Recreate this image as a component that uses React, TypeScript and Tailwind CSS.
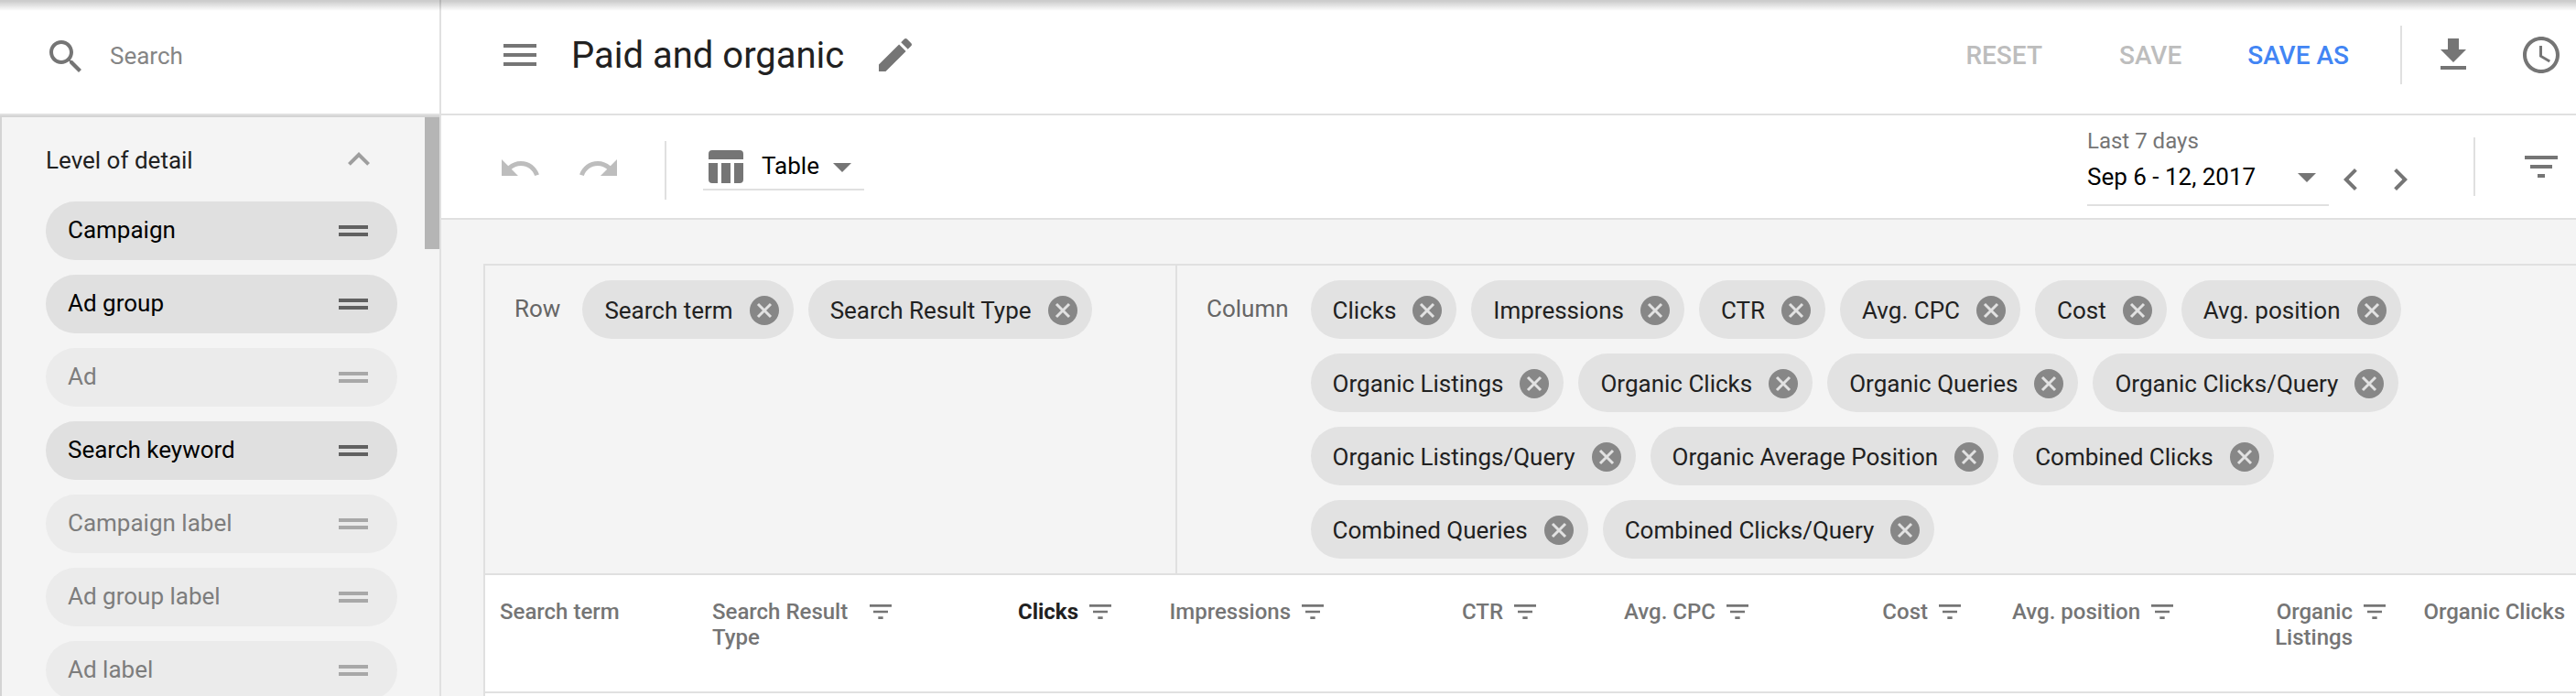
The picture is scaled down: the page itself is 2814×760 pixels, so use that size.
import { useState } from 'react'
import type { ReactNode } from 'react'

const levels = [
  { name: 'Campaign', enabled: true },
  { name: 'Ad group', enabled: true },
  { name: 'Ad', enabled: false },
  { name: 'Search keyword', enabled: true },
  { name: 'Campaign label', enabled: false },
  { name: 'Ad group label', enabled: false },
  { name: 'Ad label', enabled: false },
]

const initialRows = ['Search term', 'Search Result Type']

const initialColumns = [
  'Clicks',
  'Impressions',
  'CTR',
  'Avg. CPC',
  'Cost',
  'Avg. position',
  'Organic Listings',
  'Organic Clicks',
  'Organic Queries',
  'Organic Clicks/Query',
  'Organic Listings/Query',
  'Organic Average Position',
  'Combined Clicks',
  'Combined Queries',
  'Combined Clicks/Query',
]

const metrics = [
  'Clicks',
  'Impressions',
  'CTR',
  'Avg. CPC',
  'Cost',
  'Avg. position',
  'Organic Listings',
  'Organic Clicks',
]

const icons = {
  search:
    'M15.5 14h-.79l-.28-.27C15.41 12.59 16 11.11 16 9.5 16 5.91 13.09 3 9.5 3S3 5.91 3 9.5 5.91 16 9.5 16c1.61 0 3.09-.59 4.23-1.57l.27.28v.79l5 4.99L20.49 19l-4.99-5zm-6 0C7.01 14 5 11.99 5 9.5S7.01 5 9.5 5 14 7.01 14 9.5 11.99 14 9.5 14z',
  menu: 'M3 18h18v-2H3v2zm0-5h18v-2H3v2zm0-7v2h18V6H3z',
  edit: 'M3 17.25V21h3.75L17.81 9.94l-3.75-3.75L3 17.25zM20.71 7.04c.39-.39.39-1.02 0-1.41l-2.34-2.34c-.39-.39-1.02-.39-1.41 0l-1.83 1.83 3.75 3.75 1.83-1.83z',
  download: 'M19 9h-4V3H9v6H5l7 7 7-7zM5 18v2h14v-2H5z',
  clock:
    'M11.99 2C6.47 2 2 6.48 2 12s4.47 10 9.99 10C17.52 22 22 17.52 22 12S17.52 2 11.99 2zM12 20c-4.42 0-8-3.58-8-8s3.58-8 8-8 8 3.58 8 8-3.58 8-8 8zm.5-13H11v6l5.25 3.15.75-1.23-4.5-2.67z',
  undo: 'M12.5 8c-2.65 0-5.05.99-6.9 2.6L2 7v9h9l-3.62-3.62c1.39-1.16 3.16-1.88 5.12-1.88 3.54 0 6.55 2.31 7.6 5.5l2.37-.78C21.08 11.03 17.15 8 12.5 8z',
  redo: 'M18.4 10.6C16.55 8.99 14.15 8 11.5 8c-4.65 0-8.58 3.03-9.96 7.22L3.9 16c1.05-3.19 4.05-5.5 7.6-5.5 1.95 0 3.73.72 5.12 1.88L13 16h9V7l-3.6 3.6z',
  dropDown: 'M7 10l5 5 5-5z',
  left: 'M15.41 7.41L14 6l-6 6 6 6 1.41-1.41L10.83 12z',
  right: 'M10 6L8.59 7.41 13.17 12l-4.58 4.59L10 18l6-6z',
  up: 'M12 8l-6 6 1.41 1.41L12 10.83l4.59 4.58L18 14z',
  filter: 'M10 18h4v-2h-4v2zM3 6v2h18V6H3zm3 7h12v-2H6v2z',
  drag: 'M20 9H4v2h16V9zM4 15h16v-2H4v2z',
}

function Icon({ name, className = 'size-12' }: { name: keyof typeof icons; className?: string }) {
  return (
    <svg viewBox="0 0 24 24" fill="currentColor" aria-hidden="true" className={`shrink-0 ${className}`}>
      <path d={icons[name]} />
    </svg>
  )
}

function TableIcon() {
  return (
    <svg viewBox="0 0 38 36" fill="currentColor" aria-hidden="true" className="ml-1.5 h-9 w-[38px] shrink-0">
      <path d="M4 0h30a4 4 0 0 1 4 4v6H0V4a4 4 0 0 1 4-4zM0 14h10v22H4a4 4 0 0 1-4-4zM14 14h10v22H14zM28 14h10v18a4 4 0 0 1-4 4h-6z" />
    </svg>
  )
}

function Divider() {
  return <div className="h-16 w-0.5 shrink-0 bg-[#e0e0e0]" />
}

function Chip({ label, onRemove }: { label: string; onRemove: () => void }) {
  return (
    <li className="flex h-16 items-center gap-[18px] rounded-full bg-[#e2e2e2] pt-0.5 pr-4 pl-6 text-[26px] whitespace-nowrap text-[#212121]">
      {label}
      <button type="button" aria-label={`Remove ${label}`} onClick={onRemove}>
        <svg viewBox="0 0 32 32" className="size-8" aria-hidden="true">
          <circle cx="16" cy="16" r="16" fill="#878787" />
          <path d="M9 9l14 14M23 9L9 23" stroke="#e2e2e2" strokeWidth="3" />
        </svg>
      </button>
    </li>
  )
}

function ChipList({ items, onChange }: { items: string[]; onChange: (items: string[]) => void }) {
  return (
    <ul className="flex flex-wrap gap-4">
      {items.map((item) => (
        <Chip key={item} label={item} onRemove={() => onChange(items.filter((i) => i !== item))} />
      ))}
    </ul>
  )
}

function Sidebar() {
  const [open, setOpen] = useState(true)

  return (
    <aside className="flex w-[482px] shrink-0 flex-col border-r-2 border-[#e0e0e0]">
      <label className="flex h-[126px] shrink-0 items-center border-b-2 border-[#e0e0e0] pl-12 text-[#757575]">
        <Icon name="search" />
        <input
          type="text"
          aria-label="Search"
          placeholder="Search"
          className="ml-6 h-12 w-80 min-w-0 bg-transparent pb-0.5 text-[26px] outline-none placeholder:text-[#858585]"
        />
      </label>
      <div className="relative min-h-0 flex-1 overflow-hidden border-t-2 border-l-2 border-[#d4d4d4] bg-[#f4f4f4] pr-[46px] pl-12">
        <button
          type="button"
          aria-expanded={open}
          onClick={() => setOpen(!open)}
          className="flex h-[92px] w-full items-center justify-between pr-[18px] text-[26px] text-[#212121]"
        >
          <span className="pt-0.5">Level of detail</span>
          <Icon name="up" className="size-12 text-[#9e9e9e]" />
        </button>
        {open && (
          <ul className="flex flex-col gap-4">
            {levels.map((level) => (
              <li
                key={level.name}
                className={`flex h-16 shrink-0 items-center justify-between rounded-full px-6 text-[26px] ${
                  level.enabled ? 'bg-[#e0e0e0] text-black' : 'bg-[#ebebeb] text-[#7d7d7d]'
                }`}
              >
                <span className="pb-0.5">{level.name}</span>
                <Icon
                  name="drag"
                  className={level.enabled ? 'size-12 text-[#616161]' : 'size-12 text-[#a8a8a8]'}
                />
              </li>
            ))}
          </ul>
        )}
        <div className="absolute -top-0.5 right-0 h-[146px] w-4 bg-[#b5b5b5]" />
      </div>
    </aside>
  )
}

function Header() {
  return (
    <header className="flex h-[126px] shrink-0 items-center border-b-2 border-[#e0e0e0] pr-[14px] pb-1 pl-[62px] text-[#757575]">
      <button type="button" aria-label="Menu">
        <Icon name="menu" />
      </button>
      <h1 className="ml-8 pt-0.5 text-[40px] text-[#212121]">Paid and organic</h1>
      <button type="button" aria-label="Rename" className="ml-8">
        <Icon name="edit" />
      </button>
      <div className="ml-auto flex items-center text-[28px] font-medium">
        <button type="button" disabled className="mr-[84px] pt-0.5 text-[#bdbdbd]">
          RESET
        </button>
        <button type="button" disabled className="mr-[72px] pt-0.5 text-[#bdbdbd]">
          SAVE
        </button>
        <button type="button" className="mr-14 pt-0.5 text-[#4285f4]">
          SAVE AS
        </button>
        <Divider />
        <button type="button" aria-label="Download" className="ml-8">
          <Icon name="download" />
        </button>
        <button type="button" aria-label="Schedule" className="ml-12">
          <Icon name="clock" />
        </button>
      </div>
    </header>
  )
}

function Toolbar() {
  return (
    <div className="flex h-[114px] shrink-0 items-center border-b-2 border-[#e0e0e0] pr-[14px] pl-[62px] text-[#757575]">
      <div className="flex items-center pt-1">
        <button type="button" aria-label="Undo" disabled className="text-[#bdbdbd]">
          <Icon name="undo" />
        </button>
        <button type="button" aria-label="Redo" disabled className="mr-12 ml-[38px] text-[#bdbdbd]">
          <Icon name="redo" />
        </button>
        <div className="pt-1">
          <Divider />
        </div>
      </div>
      <div className="relative mt-0.5 ml-10 flex h-[50px] w-[176px] items-center border-b-2 border-[#e0e0e0]">
        <TableIcon />
        <select
          aria-label="View"
          defaultValue="Table"
          className="absolute inset-0 appearance-none bg-transparent pb-0.5 pl-16 text-[26px] text-black outline-none"
        >
          <option>Table</option>
        </select>
        <Icon name="dropDown" className="ml-auto size-12" />
      </div>
      <div className="ml-auto flex items-center">
        <button
          type="button"
          aria-haspopup="dialog"
          className="mb-1 flex w-[264px] items-end justify-between border-b-2 border-[#e0e0e0] pb-1.5 text-left"
        >
          <span className="flex flex-col pb-1">
            <span className="text-[24px] leading-[38px]">Last 7 days</span>
            <span className="text-[26px] leading-10 whitespace-nowrap text-black">Sep 6 - 12, 2017</span>
          </span>
          <Icon name="dropDown" />
        </button>
        <button type="button" aria-label="Previous period" className="mt-7">
          <Icon name="left" />
        </button>
        <button type="button" aria-label="Next period" className="mt-7 mr-14 ml-1.5">
          <Icon name="right" />
        </button>
        <Divider />
        <button type="button" aria-label="Filter" className="ml-12">
          <Icon name="filter" />
        </button>
      </div>
    </div>
  )
}

function DropZone({ label, children }: { label: string; children: ReactNode }) {
  return (
    <>
      <h2 className="shrink-0 text-[26px] leading-[62px] text-[#666666]">{label}</h2>
      {children}
    </>
  )
}

function ReportTable() {
  return (
    <table className="w-full min-w-[2320px] table-fixed bg-white text-[24px] leading-7 font-medium text-[#757575]">
      <thead>
        <tr className="h-32 border-b-2 border-[#e0e0e0] align-top">
          <th scope="col" className="w-[232px] px-4 pt-[26px] text-left font-medium">
            Search term
          </th>
          <th scope="col" className="w-[232px] px-4 pt-6 text-left font-medium">
            <div className="flex items-start justify-between">
              <span className="pt-0.5">Search Result Type</span>
              <button type="button" aria-label="Filter Search Result Type">
                <Icon name="filter" className="size-8" />
              </button>
            </div>
          </th>
          {metrics.map((metric) => (
            <th key={metric} scope="col" className="w-[232px] pt-6 pr-2 pl-4 text-right font-medium">
              <div className="flex items-start justify-end gap-2">
                <span className={metric === 'Clicks' ? 'pt-0.5 font-bold text-[#212121]' : 'pt-0.5'}>
                  {metric}
                </span>
                <button type="button" aria-label={`Filter ${metric}`}>
                  <Icon name="filter" className="size-8" />
                </button>
              </div>
            </th>
          ))}
        </tr>
      </thead>
    </table>
  )
}

export default function App() {
  const [rows, setRows] = useState(initialRows)
  const [columns, setColumns] = useState(initialColumns)

  return (
    <div className="relative flex h-screen overflow-hidden bg-white font-[Roboto,sans-serif]">
      <Sidebar />
      <main className="flex min-w-0 flex-1 flex-col">
        <Header />
        <Toolbar />
        <div className="min-h-0 flex-1 overflow-hidden bg-[#f4f4f4] pt-12 pl-[46px]">
          <section className="min-h-full border-t-2 border-l-2 border-[#e0e0e0] bg-white">
            <div className="flex border-b-2 border-[#e0e0e0] bg-[#f4f4f4]">
              <div className="flex w-[756px] shrink-0 gap-6 border-r-2 border-[#e0e0e0] py-4 pl-8">
                <DropZone label="Row">
                  <ChipList items={rows} onChange={setRows} />
                </DropZone>
              </div>
              <div className="flex flex-1 gap-6 py-4 pr-32 pl-8">
                <DropZone label="Column">
                  <ChipList items={columns} onChange={setColumns} />
                </DropZone>
              </div>
            </div>
            <ReportTable />
          </section>
        </div>
      </main>
      <div className="pointer-events-none absolute inset-x-0 top-0 h-3 bg-linear-to-b from-black/20 from-10% to-transparent" />
    </div>
  )
}
